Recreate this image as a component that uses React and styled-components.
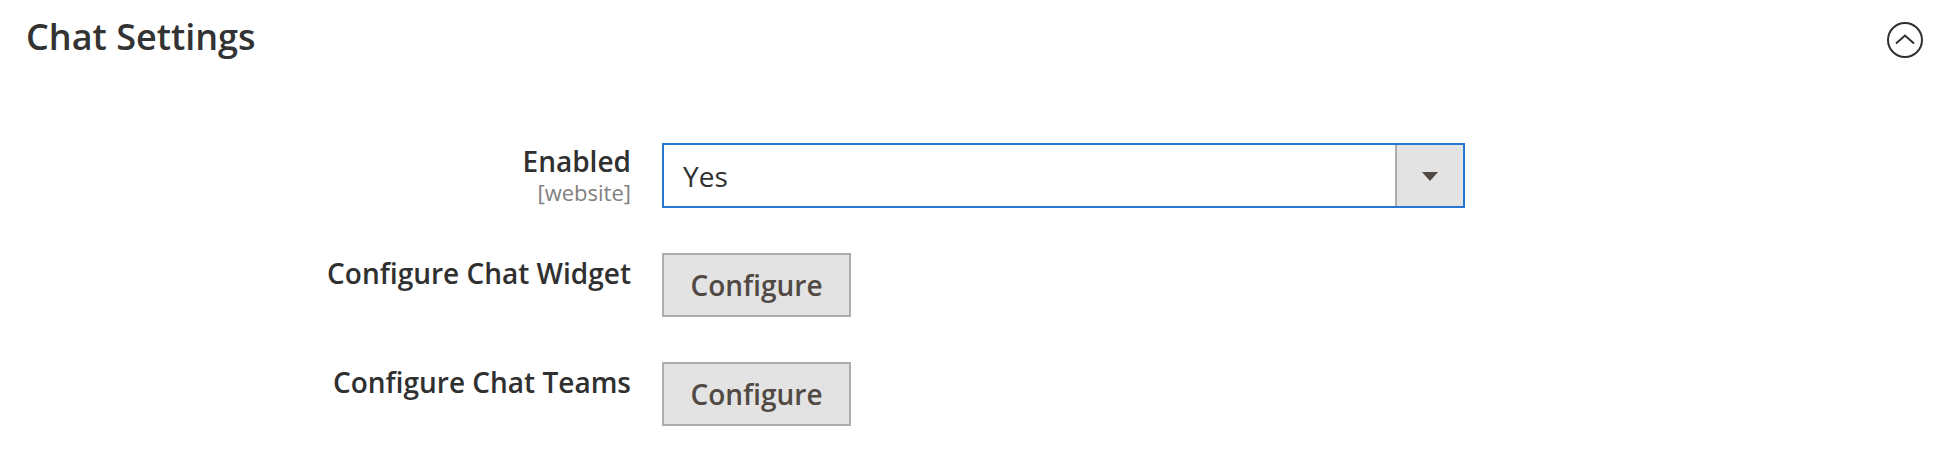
import React from "react";
import styled, { createGlobalStyle } from "styled-components";

const Global = createGlobalStyle`
  html, body { margin: 0; padding: 0; background: #fff; }
  body { font-family: "Open Sans", "Noto Sans", sans-serif; color: #303030; }
`;

const Section = styled.section`
  width: 1946px;
  height: 462px;
  box-sizing: border-box;
`;

const Header = styled.div`
  display: flex;
  align-items: flex-start;
  justify-content: space-between;
  padding: 12px 22px 0 26px;
  height: 142px;
  box-sizing: border-box;
`;

const Title = styled.h2`
  margin: 0;
  font-size: 36px;
  font-weight: 600;
  line-height: normal;
  color: #333;
`;

const Toggle = styled.button`
  margin-top: 9px;
  width: 38px;
  height: 38px;
  padding: 0;
  border: none;
  background: none;
  display: flex;
`;

const Rows = styled.div`
  display: grid;
  grid-template-columns: 631px 803px;
  column-gap: 31px;
  row-gap: 45px;
  align-items: start;
`;

const Label = styled.div`
  text-align: right;
  padding-top: ${(p) => p.$pt}px;
`;

const LabelText = styled.div`
  font-size: 28px;
  font-weight: 600;
  line-height: 38px;
  color: #303030;
`;

const Scope = styled.div`
  font-size: 22px;
  line-height: 30px;
  margin-top: -3px;
  color: #808080;
`;

const Select = styled.div`
  display: flex;
  height: 65px;
  box-sizing: border-box;
  border: 2px solid #2577d0;
  margin-top: 1px;
`;

const SelectValue = styled.div`
  flex: 1;
  display: flex;
  align-items: center;
  padding-left: 19px;
  font-size: 28px;
  color: #303030;
`;

const SelectArrow = styled.div`
  width: 66px;
  background: #e3e3e3;
  border-left: 2px solid #adadad;
  display: flex;
  align-items: center;
  justify-content: center;
`;

const Triangle = styled.span`
  width: 0;
  height: 0;
  border-left: 8px solid transparent;
  border-right: 8px solid transparent;
  border-top: 9px solid #514943;
  margin-top: 1px;
`;

const Button = styled.button`
  justify-self: start;
  width: 189px;
  height: 64px;
  box-sizing: border-box;
  background: #e3e3e3;
  border: 2px solid #adadad;
  color: #514943;
  font-family: "Open Sans", "Noto Sans", sans-serif;
  font-size: 28px;
  font-weight: 600;
  padding: 0;
  display: flex;
  align-items: center;
  justify-content: center;
  cursor: pointer;
`;

function ChevronCircle() {
  return (
    <svg width="38" height="38" viewBox="0 0 38 38" fill="none">
      <circle cx="19" cy="19" r="17" stroke="#303030" strokeWidth="2" />
      <polyline points="10,22.5 19,14.5 28,22.5" stroke="#303030" strokeWidth="2" fill="none" />
    </svg>
  );
}

export default function App() {
  return (
    <>
      <Global />
      <Section>
        <Header>
          <Title>Chat Settings</Title>
          <Toggle aria-label="Collapse">
            <ChevronCircle />
          </Toggle>
        </Header>
        <Rows>
          <Label $pt={0}>
            <LabelText>Enabled</LabelText>
            <Scope>[website]</Scope>
          </Label>
          <Select>
            <SelectValue>Yes</SelectValue>
            <SelectArrow>
              <Triangle />
            </SelectArrow>
          </Select>
          <Label $pt={1}>
            <LabelText>Configure Chat Widget</LabelText>
          </Label>
          <Button>Configure</Button>
          <Label $pt={1}>
            <LabelText>Configure Chat Teams</LabelText>
          </Label>
          <Button>Configure</Button>
        </Rows>
      </Section>
    </>
  );
}
